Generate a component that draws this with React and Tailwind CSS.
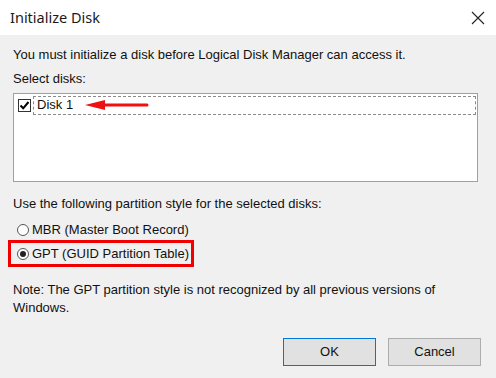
import React from 'react';

const CheckBox = () => (
  <span className="flex items-center justify-center w-[13px] h-[13px] border border-[#333333] bg-white shrink-0">
    <svg width="11" height="11" viewBox="0 0 11 11">
      <path d="M1.5 5.5 L4.2 8.3 L9.5 2" fill="none" stroke="#000" strokeWidth="2" />
    </svg>
  </span>
);

const Radio = ({ checked }) => (
  <span className="flex items-center justify-center w-[12px] h-[12px] rounded-full border border-[#555555] bg-white shrink-0">
    {checked && <span className="w-[6px] h-[6px] rounded-full bg-[#222222]" />}
  </span>
);

const App = () => {
  return (
    <div
      className="w-[496px] h-[378px] bg-[#f0f0f0] text-black flex flex-col"
      style={{ fontFamily: '"Liberation Sans", Arial, sans-serif' }}
    >
      <div className="h-[35px] bg-white flex items-center justify-between pl-[10px] pr-[11px] shrink-0">
        <span className="text-[14.5px] text-[#1a1a1a]" style={{ fontFamily: '"Noto Sans", sans-serif' }}>
          Initialize Disk
        </span>
        <svg width="14" height="14" viewBox="0 0 14 14">
          <path d="M1 1 L13 13 M13 1 L1 13" stroke="#222" strokeWidth="1.1" />
        </svg>
      </div>

      <div className="flex flex-col px-[13px] text-[13px] leading-[16px] text-[#111111]">
        <p className="mt-[12px]">You must initialize a disk before Logical Disk Manager can access it.</p>
        <p className="mt-[8px]">Select disks:</p>

        <div className="mt-[6px] h-[89px] w-[465px] bg-white border border-[#a0a0a0] p-[1px]">
          <div className="flex items-center h-[20px]">
            <span className="ml-[3px]">
              <CheckBox />
            </span>
            <div className="ml-[2px] flex-1 h-[19px] border border-dashed border-[#8a8a8a] flex items-center pl-[3px]">
              <span>Disk 1</span>
              <svg className="ml-[12px]" width="64" height="12" viewBox="0 0 64 12">
                <path d="M0 6 L20 1 L20 11 Z" fill="#ee1111" />
                <path d="M18 6 H62" stroke="#ee1111" strokeWidth="3" strokeLinecap="round" />
              </svg>
            </div>
          </div>
        </div>

        <p className="mt-[14px]">Use the following partition style for the selected disks:</p>

        <div className="mt-[10px] flex items-center gap-[3px] pl-[4px]">
          <Radio />
          <span>MBR (Master Boot Record)</span>
        </div>

        <div className="mt-[2px] ml-[-5px] self-start flex items-center gap-[3px] border-[3px] border-[#f00000] h-[27px] pl-[6px] pr-[2px]">
          <Radio checked />
          <span>GPT (GUID Partition Table)</span>
        </div>

        <p className="mt-[14px] leading-[18px]">
          Note: The GPT partition style is not recognized by all previous versions of
          <br />
          Windows.
        </p>

        <div className="mt-[21px] flex justify-end gap-[12px] pr-[2px]">
          <button className="w-[93px] h-[28px] bg-[#e1e1e1] border border-[#0078d7] text-[13px]">OK</button>
          <button className="w-[93px] h-[28px] bg-[#e1e1e1] border border-[#adadad] text-[13px]">Cancel</button>
        </div>
      </div>
    </div>
  );
};

export default App;
